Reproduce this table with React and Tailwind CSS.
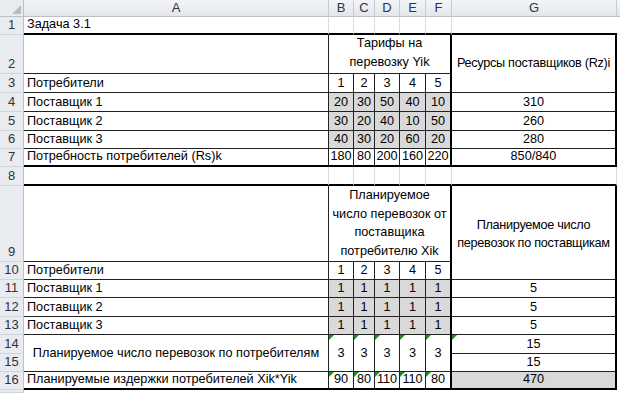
import React from "react";

// Excel-like sheet: columns (row hdr, A..G, rest), rows (col hdr, 1..16, rest)
const cols = ["A", "B", "C", "D", "E", "F", "G"];

function Tri() {
  return (
    <span className="absolute left-0 top-0 h-0 w-0 border-t-[5px] border-r-[5px] border-t-[#1f8f1f] border-r-transparent" />
  );
}

function RowHead({ className, children }) {
  return (
    <div
      className={[
        "flex items-end justify-center pb-[1px] border-r border-b border-r-[#b9c0c9] border-b-[#cfd4db] bg-[#e8ebef] text-[13px] text-[#333] leading-[16px]",
        className,
      ].join(" ")}
    >
      {children}
    </div>
  );
}

export default function App() {
  return (
    <div
      className="grid h-[393px] w-[620px] overflow-hidden bg-white text-[12.7px] text-black grid-cols-[24px_305px_25px_21px_25px_26px_26px_165px_1fr] grid-rows-[17px_18px_39px_19px_19px_19px_18px_18px_19px_76px_18px_18px_19px_18px_19px_18px_18px_1fr]"
      style={{ fontFamily: '"Liberation Sans", Arial, sans-serif' }}
    >
      {/* column header */}
      <div className="relative col-start-1 row-start-1 border-r border-b border-[#b9c0c9] bg-[#e8ebef]">
        <span className="absolute right-[2px] bottom-[2px] h-0 w-0 border-b-[9px] border-l-[9px] border-b-[#b8bdc5] border-l-transparent" />
      </div>
      {cols.map((c) => (
        <div
          key={c}
          className="row-start-1 flex items-center justify-center border-r border-b border-r-[#c6ccd4] border-b-[#b9c0c9] bg-linear-to-b from-[#f3f5f8] to-[#e2e6eb] text-[13px] text-[#2a3548]"
        >
          {c}
        </div>
      ))}
      <div className="col-start-9 row-start-1 border-b border-[#b9c0c9] bg-linear-to-b from-[#f3f5f8] to-[#e2e6eb]" />

      {/* row headers */}
      <RowHead className="col-start-1 row-start-2">1</RowHead>
      <RowHead className="col-start-1 row-start-3">2</RowHead>
      <RowHead className="col-start-1 row-start-4">3</RowHead>
      <RowHead className="col-start-1 row-start-5">4</RowHead>
      <RowHead className="col-start-1 row-start-6">5</RowHead>
      <RowHead className="col-start-1 row-start-7">6</RowHead>
      <RowHead className="col-start-1 row-start-8">7</RowHead>
      <RowHead className="col-start-1 row-start-9">8</RowHead>
      <RowHead className="col-start-1 row-start-10">9</RowHead>
      <RowHead className="col-start-1 row-start-11">10</RowHead>
      <RowHead className="col-start-1 row-start-12">11</RowHead>
      <RowHead className="col-start-1 row-start-13">12</RowHead>
      <RowHead className="col-start-1 row-start-14">13</RowHead>
      <RowHead className="col-start-1 row-start-15">14</RowHead>
      <RowHead className="col-start-1 row-start-16">15</RowHead>
      <RowHead className="col-start-1 row-start-17">16</RowHead>
      <RowHead className="col-start-1 row-start-18" />

      {/* row 1 */}
      <div className="col-start-2 row-start-2 flex items-end pb-[1px] pl-[3px] leading-[16px] border-b-2 border-b-black border-r border-r-[#dadcdd]">
        Задача 3.1
      </div>
      <div className="col-start-3 row-start-2 border-b-2 border-b-black border-r border-r-[#dadcdd]" />
      <div className="col-start-4 row-start-2 border-b-2 border-b-black border-r border-r-[#dadcdd]" />
      <div className="col-start-5 row-start-2 border-b-2 border-b-black border-r border-r-[#dadcdd]" />
      <div className="col-start-6 row-start-2 border-b-2 border-b-black border-r border-r-[#dadcdd]" />
      <div className="col-start-7 row-start-2 border-b-2 border-b-black border-r border-r-[#dadcdd]" />
      <div className="col-start-8 row-start-2 border-b-2 border-b-black" />
      <div className="col-start-9 row-start-2 border-b border-b-[#dadcdd]" />

      {/* table 1 */}
      <div className="col-start-2 row-start-3 border-r border-b border-[#222]" />
      <div className="col-start-3 col-span-5 row-start-3 flex flex-col items-center justify-end pb-[1px] text-center leading-[19px] border-r-2 border-r-black border-b border-b-[#222]">
        <span>Тарифы на</span>
        <span>перевозку Yik</span>
      </div>
      <div className="col-start-8 row-start-3 row-span-2 flex items-center justify-center whitespace-nowrap tracking-[-0.3px] border-r-2 border-b border-r-black border-b-[#222]">
        Ресурсы поставщиков (Rz)i
      </div>

      <div className="col-start-2 row-start-4 flex items-end pb-[1px] pl-[3px] leading-[16px] border-r border-b border-[#222]">Потребители</div>
      {["1", "2", "3", "4", "5"].map((v, i) => (
        <div
          key={v}
          className={[
            "row-start-4 flex items-end justify-center pb-[1px] leading-[16px] border-b border-b-[#222]",
            i === 4 ? "border-r-2 border-r-black" : "border-r border-r-[#222]",
          ].join(" ")}
        >
          {v}
        </div>
      ))}

      {[
        ["Поставщик 1", ["20", "30", "50", "40", "10"], "310", "row-start-5"],
        ["Поставщик 2", ["30", "20", "40", "10", "50"], "260", "row-start-6"],
        ["Поставщик 3", ["40", "30", "20", "60", "20"], "280", "row-start-7"],
      ].map(([name, vals, total, row]) => (
        <React.Fragment key={name}>
          <div className={`${row} col-start-2 flex items-end pb-[1px] pl-[3px] leading-[16px] border-r border-b border-[#222]`}>{name}</div>
          {vals.map((v, i) => (
            <div
              key={i}
              className={[
                row,
                "flex items-end justify-center pb-[1px] leading-[16px] bg-[#d9d9d9] border-b border-b-[#222]",
                i === 4 ? "border-r-2 border-r-black" : "border-r border-r-[#222]",
              ].join(" ")}
            >
              {v}
            </div>
          ))}
          <div className={`${row} col-start-8 flex items-end justify-center pb-[1px] leading-[16px] border-r-2 border-b border-r-black border-b-[#222]`}>{total}</div>
          <div className={`${row} col-start-9`} />
        </React.Fragment>
      ))}

      <div className="col-start-2 row-start-8 flex items-end pb-[1px] pl-[3px] leading-[16px] border-r border-r-[#222] border-b-2 border-b-black">Потребность потребителей (Rs)k</div>
      {["180", "80", "200", "160", "220"].map((v, i) => (
        <div
          key={i}
          className={[
            "row-start-8 flex items-end justify-center pb-[1px] leading-[16px] border-b-2 border-b-black",
            i === 4 ? "border-r-2 border-r-black" : "border-r border-r-[#222]",
          ].join(" ")}
        >
          {v}
        </div>
      ))}
      <div className="col-start-8 row-start-8 flex items-end justify-center pb-[1px] leading-[16px] border-r-2 border-r-black border-b-2 border-b-black">850/840</div>

      {/* row 8 */}
      <div className="col-start-2 row-start-9 border-b-2 border-b-black border-r border-r-[#dadcdd]" />
      <div className="col-start-3 row-start-9 border-b-2 border-b-black border-r border-r-[#dadcdd]" />
      <div className="col-start-4 row-start-9 border-b-2 border-b-black border-r border-r-[#dadcdd]" />
      <div className="col-start-5 row-start-9 border-b-2 border-b-black border-r border-r-[#dadcdd]" />
      <div className="col-start-6 row-start-9 border-b-2 border-b-black border-r border-r-[#dadcdd]" />
      <div className="col-start-7 row-start-9 border-b-2 border-b-black border-r border-r-[#dadcdd]" />
      <div className="col-start-8 row-start-9 border-b-2 border-b-black border-r border-r-[#dadcdd]" />

      {/* table 2 */}
      <div className="col-start-2 row-start-10 border-r border-b border-[#222]" />
      <div className="col-start-3 col-span-5 row-start-10 flex flex-col items-center justify-end pb-[1px] text-center whitespace-nowrap leading-[18.5px] border-r-2 border-r-black border-b border-b-[#222]">
        <span>Планируемое</span>
        <span>число перевозок от</span>
        <span>поставщика</span>
        <span>потребителю Xik</span>
      </div>
      <div className="col-start-8 row-start-10 row-span-2 flex flex-col items-center justify-center pt-[2px] text-center whitespace-nowrap tracking-[-0.3px] leading-[18px] border-r-2 border-b border-r-black border-b-[#222]">
        <span>Планируемое число</span>
        <span>перевозок по поставщикам</span>
      </div>

      <div className="col-start-2 row-start-11 flex items-end pb-[1px] pl-[3px] leading-[16px] border-r border-b border-[#222]">Потребители</div>
      {["1", "2", "3", "4", "5"].map((v, i) => (
        <div
          key={v}
          className={[
            "row-start-11 flex items-end justify-center pb-[1px] leading-[16px] border-b border-b-[#222]",
            i === 4 ? "border-r-2 border-r-black" : "border-r border-r-[#222]",
          ].join(" ")}
        >
          {v}
        </div>
      ))}

      {[
        ["Поставщик 1", "row-start-12"],
        ["Поставщик 2", "row-start-13"],
        ["Поставщик 3", "row-start-14"],
      ].map(([name, row]) => (
        <React.Fragment key={name}>
          <div className={`${row} col-start-2 flex items-end pb-[1px] pl-[3px] leading-[16px] border-r border-b border-[#222]`}>{name}</div>
          {[0, 1, 2, 3, 4].map((i) => (
            <div
              key={i}
              className={[
                row,
                "flex items-end justify-center pb-[1px] leading-[16px] bg-[#d9d9d9] border-b border-b-[#222]",
                i === 4 ? "border-r-2 border-r-black" : "border-r border-r-[#222]",
              ].join(" ")}
            >
              1
            </div>
          ))}
          <div className={`${row} col-start-8 flex items-end justify-center pb-[1px] leading-[16px] border-r-2 border-b border-r-black border-b-[#222]`}>5</div>
        </React.Fragment>
      ))}

      <div className="col-start-2 row-start-15 row-span-2 flex items-center justify-center pt-[1px] border-r border-b border-[#222]">
        Планируемое число перевозок по потребителям
      </div>
      {[0, 1, 2, 3, 4].map((i) => (
        <div
          key={i}
          className={[
            "relative row-start-15 row-span-2 flex items-center justify-center pt-[1px] border-b border-b-[#222]",
            i === 4 ? "border-r-2 border-r-black" : "border-r border-r-[#222]",
          ].join(" ")}
        >
          <Tri />3
        </div>
      ))}
      <div className="relative col-start-8 row-start-15 flex items-end justify-center pb-[1px] leading-[16px] border-r-2 border-b border-r-black border-b-[#222]">
        <Tri />15
      </div>
      <div className="col-start-8 row-start-16 flex items-end justify-center pb-[1px] leading-[16px] border-r-2 border-b border-r-black border-b-[#222]">15</div>

      <div className="col-start-2 row-start-17 flex items-end pb-[1px] pl-[3px] leading-[16px] border-r border-r-[#222] border-b-2 border-b-black">Планируемые издержки потребителей Xik*Yik</div>
      {["90", "80", "110", "110", "80"].map((v, i) => (
        <div
          key={i}
          className={[
            "relative row-start-17 flex items-end justify-center pb-[1px] leading-[16px] border-b-2 border-b-black",
            i === 4 ? "border-r-2 border-r-black" : "border-r border-r-[#222]",
          ].join(" ")}
        >
          <Tri />
          {v}
        </div>
      ))}
      <div className="col-start-8 row-start-17 flex items-end justify-center pb-[1px] leading-[16px] bg-[#d9d9d9] border-r-2 border-r-black border-b-2 border-b-black">470</div>
    </div>
  );
}
